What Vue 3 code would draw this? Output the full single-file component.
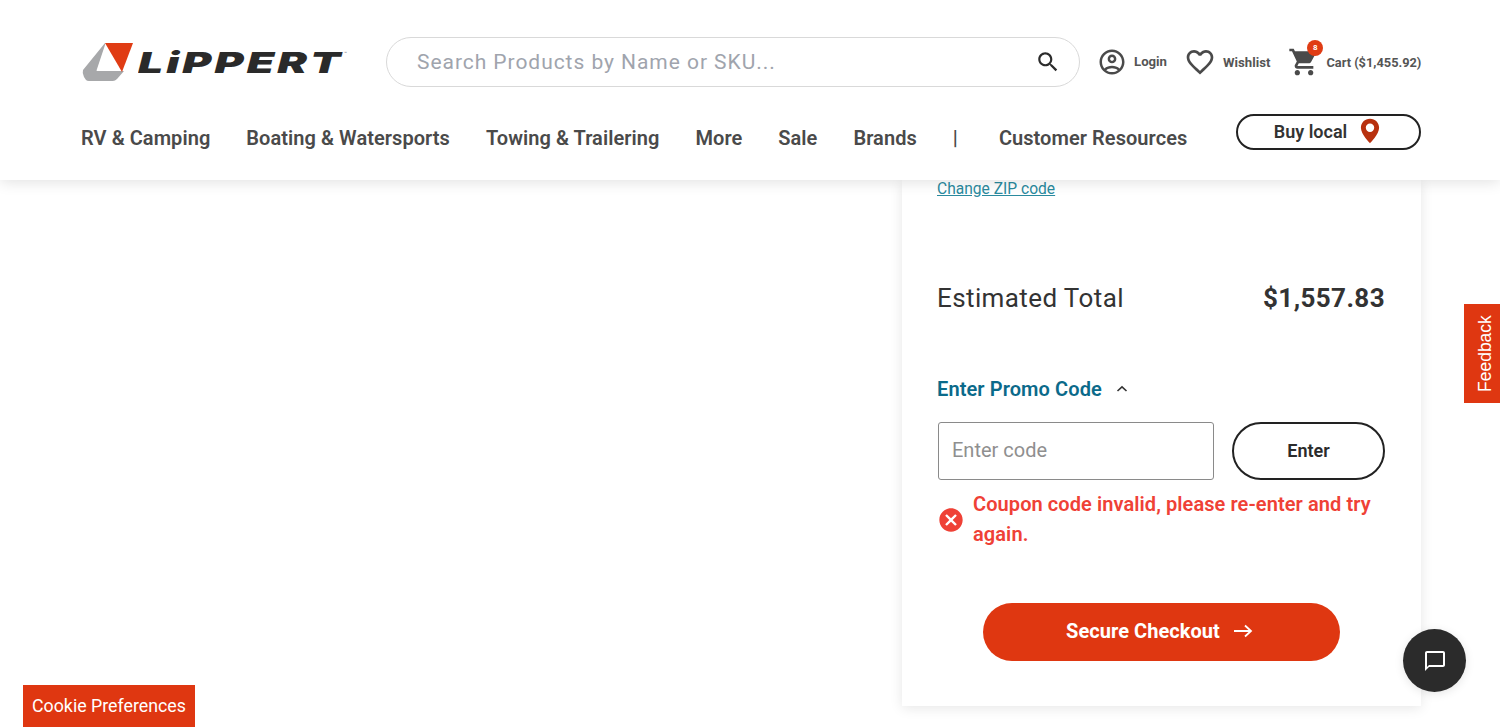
<script setup>
const navItems = ['RV & Camping', 'Boating & Watersports', 'Towing & Trailering', 'More', 'Sale', 'Brands', '|', 'Customer Resources']
</script>

<template>
  <div class="page">
    <header class="header">
      <div class="top">
        <a class="logo">
          <svg class="mark" width="52" height="40" viewBox="0 0 52 40">
            <path d="M23 1 L1 28 Q0 31 2 35 L4 38 Q5 39 7 39 L31 39 Q33 39 35 37 L42 29 L15 29 Q14 29 15 27 L23 3 Z" fill="#a7a8aa" />
            <path d="M23 1 H51 L40 30 Z" fill="#e03c14" />
          </svg>
          <span class="wordmark">LiPPERT</span>
          <span class="tm">™</span>
        </a>
        <div class="search">
          <input class="search-input" placeholder="Search Products by Name or SKU..." />
          <svg width="26" height="26" viewBox="0 0 24 24" fill="#2b2b2b"><path d="M15.5 14h-.79l-.28-.27C15.41 12.59 16 11.11 16 9.5 16 5.91 13.09 3 9.5 3S3 5.91 3 9.5 5.91 16 9.5 16c1.61 0 3.09-.59 4.23-1.57l.27.28v.79l5 4.99L20.49 19l-4.99-5zm-6 0C7.01 14 5 11.99 5 9.5S7.01 5 9.5 5 14 7.01 14 9.5 11.99 14 9.5 14z" /></svg>
        </div>
        <div class="actions">
          <a class="action login">
            <svg width="30" height="30" viewBox="0 0 24 24" fill="#4a4a4a"><path d="M12 2C6.48 2 2 6.48 2 12s4.48 10 10 10 10-4.48 10-10S17.52 2 12 2zM7.35 18.5C8.66 17.56 10.26 17 12 17s3.34.56 4.65 1.5c-1.31.94-2.91 1.5-4.65 1.5s-3.34-.56-4.65-1.5zm10.79-1.38C16.45 15.8 14.32 15 12 15s-4.45.8-6.14 2.12C4.7 15.73 4 13.95 4 12c0-4.42 3.58-8 8-8s8 3.58 8 8c0 1.95-.7 3.73-1.86 5.12zM12 6c-1.93 0-3.5 1.57-3.5 3.5S10.07 13 12 13s3.5-1.57 3.5-3.5S13.93 6 12 6zm0 5c-.83 0-1.5-.67-1.5-1.5S11.17 8 12 8s1.5.67 1.5 1.5S12.83 11 12 11z" /></svg>
            <span>Login</span>
          </a>
          <a class="action wish">
            <svg width="32" height="32" viewBox="0 0 24 24" fill="#4a4a4a"><path d="M16.5 3c-1.74 0-3.41.81-4.5 2.09C10.91 3.81 9.24 3 7.5 3 4.42 3 2 5.42 2 8.5c0 3.78 3.4 6.86 8.55 11.54L12 21.35l1.45-1.32C18.6 15.36 22 12.28 22 8.5 22 5.42 19.58 3 16.5 3zm-4.4 15.55l-.1.1-.1-.1C7.14 14.24 4 11.39 4 8.5 4 6.5 5.5 5 7.5 5c1.54 0 3.04.99 3.57 2.36h1.87C13.46 5.99 14.96 5 16.5 5c2 0 3.5 1.5 3.5 3.5 0 2.89-3.14 5.74-7.9 10.05z" /></svg>
            <span>Wishlist</span>
          </a>
          <a class="action cart">
            <span class="cart-icon">
              <svg width="32" height="32" viewBox="0 0 24 24" fill="#4a4a4a"><path d="M7 18c-1.1 0-1.99.9-1.99 2S5.9 22 7 22s2-.9 2-2-.9-2-2-2zM1 2v2h2l3.6 7.59-1.35 2.45c-.16.28-.25.61-.25.96 0 1.1.9 2 2 2h12v-2H7.42c-.14 0-.25-.11-.25-.25l.03-.12.9-1.63h7.45c.75 0 1.41-.41 1.75-1.03l3.58-6.49c.08-.14.12-.31.12-.48 0-.55-.45-1-1-1H5.21l-.94-2H1zm16 16c-1.1 0-1.99.9-1.99 2s.89 2 1.99 2 2-.9 2-2-.9-2-2-2z" /></svg>
              <span class="badge">8</span>
            </span>
            <span>Cart ($1,455.92)</span>
          </a>
        </div>
      </div>
      <nav class="nav">
        <a v-for="item in navItems" :key="item" class="nav-item" :class="{ sep: item === '|' }">{{ item }}</a>
        <a class="buy">
          <span>Buy local</span>
          <svg width="28" height="28" viewBox="0 0 24 24" fill="#b8310f"><path d="M12 1.500C7.600 1.500 4.200 4.900 4.200 9.300c0 5.600 7.800 13.200 7.800 13.200s7.800-7.600 7.800-13.200c0-4.400-3.400-7.800-7.800-7.800zm0 11.300a3.600 3.600 0 1 1 0-7.200 3.600 3.600 0 0 1 0 7.200z" /></svg>
        </a>
      </nav>
    </header>

    <main class="main">
      <section class="card">
        <a class="zip">Change ZIP code</a>
        <div class="total">
          <span>Estimated Total</span>
          <strong>$1,557.83</strong>
        </div>
        <div class="promo-head">
          <span>Enter Promo Code</span>
          <svg width="16" height="16" viewBox="0 0 16 16" fill="none" stroke="#333" stroke-width="1.6"><path d="M3.500 10 L8 5.800 L12.500 10" /></svg>
        </div>
        <div class="promo-row">
          <input class="code" placeholder="Enter code" />
          <button class="enter">Enter</button>
        </div>
        <div class="error">
          <svg width="28" height="28" viewBox="0 0 24 24" fill="#ef4136"><path d="M12 2C6.470 2 2 6.470 2 12s4.470 10 10 10 10-4.470 10-10S17.530 2 12 2zm5 13.590L15.590 17 12 13.410 8.410 17 7 15.590 10.590 12 7 8.410 8.410 7 12 10.590 15.590 7 17 8.410 13.410 12 17 15.590z" /></svg>
          <p>Coupon code invalid, please re-enter and try again.</p>
        </div>
        <button class="checkout">
          <span>Secure Checkout</span>
          <svg width="20" height="14" viewBox="0 0 20 14" fill="none" stroke="#fff" stroke-width="1.8"><path d="M1 7 H18 M12 1.500 L18 7 L12 12.500" /></svg>
        </button>
      </section>
    </main>

    <a class="feedback">Feedback</a>
    <a class="cookie">Cookie Preferences</a>
    <button class="chat">
      <svg width="30" height="30" viewBox="0 0 24 24" fill="#fff"><path d="M20 2H4c-1.100 0-2 .9-2 2v18l4-4h14c1.100 0 2-.9 2-2V4c0-1.100-.9-2-2-2zm0 14H6l-2 2V4h16v12z" transform="translate(2.400 2.400) scale(.8)" /></svg>
    </button>
  </div>
</template>

<style>
html, body { margin: 0; background: #fff; }
</style>

<style scoped>
.page {
  position: relative;
  height: 727px;
  overflow: hidden;
  font-family: Roboto, "Liberation Sans", sans-serif;
  color: #2b2b2b;
  background: #fff;
}
.header {
  position: relative;
  z-index: 2;
  height: 180px;
  box-sizing: border-box;
  padding: 37px 79px 0 81px;
  background: #fff;
  box-shadow: 0 2px 14px rgba(0, 0, 0, .12);
}
.top {
  display: flex;
  align-items: center;
  height: 50px;
}
.logo {
  display: flex;
  align-items: center;
  width: 305px;
  flex: none;
  position: relative;
  padding-left: 1px;
  box-sizing: border-box;
}
.mark { flex: none; }
.wordmark {
  margin-left: 4px;
  font-family: Inter, "Liberation Sans", sans-serif;
  font-size: 29px;
  font-weight: 900;
  font-style: italic;
  letter-spacing: 2px;
  color: #2a2a2a;
  line-height: 1;
  transform: scaleX(1.53);
  transform-origin: left center;
}
.tm {
  position: absolute;
  left: 263px;
  top: 8px;
  font-size: 5px;
  color: #777;
}
.search {
  flex: none;
  width: 694px;
  height: 50px;
  box-sizing: border-box;
  border: 1px solid #d9d9d9;
  border-radius: 25px;
  display: flex;
  align-items: center;
  padding: 0 18px 0 30px;
}
.search-input {
  flex: 1;
  min-width: 0;
  border: 0;
  outline: 0;
  padding: 0;
  background: transparent;
  font: 400 21px Roboto, sans-serif;
  letter-spacing: .95px;
}
.search-input::placeholder { color: #a0a4ad; opacity: 1; }
.actions {
  display: flex;
  align-items: center;
  margin-left: 17px;
  flex: none;
  width: 325px;
}
.action {
  display: flex;
  align-items: center;
  font-size: 13.200px;
  font-weight: 700;
  color: #555;
  white-space: nowrap;
}
.login { gap: 7px; }
.login span { margin-top: -2px; }
.wish { margin-left: 17px; gap: 7px; }
.cart { margin-left: 18px; gap: 6px; font-size: 12.800px; }
.cart-icon { position: relative; display: block; height: 32px; }
.badge {
  position: absolute;
  top: -6px;
  right: -3px;
  width: 16px;
  height: 16px;
  border-radius: 50%;
  background: #e03c14;
  color: #fff;
  font-size: 8px;
  line-height: 16px;
  text-align: center;
}
.nav {
  display: flex;
  align-items: flex-start;
  gap: 36px;
  margin-top: 27px;
}
.nav-item {
  font-size: 20px;
  font-weight: 600;
  letter-spacing: .06px;
  line-height: 48px;
  height: 48px;
  color: #4a4a4a;
  white-space: nowrap;
}
.sep { margin-right: 5px; }
.buy {
  margin-left: auto;
  flex: none;
  width: 185px;
  height: 36px;
  box-sizing: border-box;
  border: 2px solid #222;
  border-radius: 18px;
  display: flex;
  align-items: center;
  justify-content: center;
  gap: 9px;
  padding: 0 0 2px 1px;
  font-size: 18px;
  font-weight: 600;
  color: #333;
}
.main {
  display: flex;
  justify-content: flex-end;
  padding-right: 79px;
}
.card {
  width: 519px;
  height: 526px;
  box-sizing: border-box;
  padding: 0 36px 0 35px;
  background: #fff;
  box-shadow: 0 2px 12px rgba(0, 0, 0, .1);
}
.zip {
  display: block;
  margin-top: -1px;
  font-size: 15.600px;
  line-height: 20px;
  color: #2a8a9e;
  text-decoration: underline;
}
.total {
  display: flex;
  justify-content: space-between;
  align-items: center;
  margin-top: 79px;
  font-size: 26px;
  letter-spacing: .4px;
  line-height: 40px;
  color: #333;
}
.total strong { font-weight: 700; }
.promo-head {
  display: flex;
  align-items: center;
  gap: 12px;
  margin-top: 56px;
  font-size: 20px;
  font-weight: 600;
  letter-spacing: .1px;
  line-height: 30px;
  color: #0b6a8a;
}
.promo-row {
  display: flex;
  justify-content: space-between;
  margin-top: 18px;
  padding-left: 1px;
}
.code {
  width: 276px;
  height: 58px;
  box-sizing: border-box;
  border: 1px solid #8a8a8a;
  border-radius: 3px;
  padding: 0 13px 2px;
  outline: 0;
  font: 400 20px Roboto, sans-serif;
}
.code::placeholder { color: #8f8f8f; opacity: 1; }
.enter {
  width: 153px;
  height: 58px;
  background: #fff;
  border: 2px solid #222;
  border-radius: 29px;
  font: 600 18px Roboto, sans-serif;
  color: #2b2b2b;
  padding: 0 0 2px;
}
.error {
  display: flex;
  align-items: center;
  gap: 8px;
  margin-top: 9px;
  color: #ef4136;
}
.error svg { flex: none; margin-top: 2px; }
.error p {
  margin: 0;
  font-size: 20px;
  font-weight: 600;
  letter-spacing: .08px;
  line-height: 30px;
}
.checkout {
  display: flex;
  align-items: center;
  justify-content: center;
  gap: 13px;
  width: 357px;
  height: 58px;
  margin: 54px auto 0;
  border: 0;
  border-radius: 29px;
  background: #df3711;
  color: #fff;
  font: 700 20px Roboto, sans-serif;
  letter-spacing: .05px;
  padding: 0 3px 2px 0;
}
.feedback {
  position: absolute;
  right: 0;
  top: 304px;
  width: 36px;
  height: 99px;
  display: flex;
  align-items: center;
  justify-content: center;
  box-sizing: border-box;
  padding-right: 6px;
  background: #df3711;
  color: #fff;
  writing-mode: vertical-rl;
  transform: rotate(180deg);
  font: 400 17.500px "Liberation Sans", sans-serif;
}
.cookie {
  position: absolute;
  left: 23px;
  top: 685px;
  width: 172px;
  height: 42px;
  box-sizing: border-box;
  padding-bottom: 2px;
  display: flex;
  align-items: center;
  justify-content: center;
  background: #df3711;
  color: #fff;
  font-size: 17.800px;
  white-space: nowrap;
}
.chat {
  position: absolute;
  left: 1403px;
  top: 629px;
  width: 63px;
  height: 63px;
  border: 0;
  border-radius: 50%;
  padding: 0;
  background: #2b2b2b;
  display: flex;
  align-items: center;
  justify-content: center;
  box-shadow: 0 2px 10px rgba(0, 0, 0, .1);
}
</style>
